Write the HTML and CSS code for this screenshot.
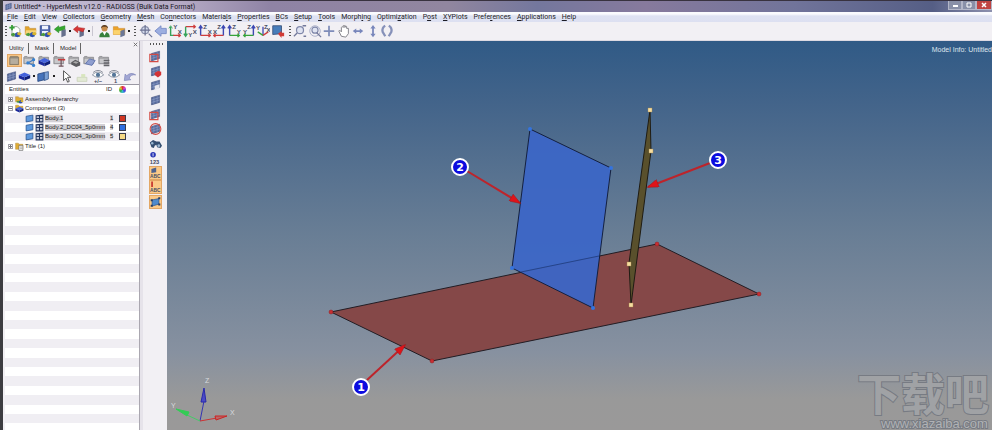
FILE: index.html
```html
<!DOCTYPE html>
<html lang="en">
<head>
<meta charset="utf-8">
<title>Untitled* - HyperMesh v12.0 - RADIOSS (Bulk Data Format)</title>
<link rel="stylesheet" href="styles.css">
</head>
<body>
<svg class="defs" aria-hidden="true">
  <defs>
    <symbol id="cubes" viewBox="0 0 16 16"><path fill="#2e4faf" d="M7 11l3-2 3 2v3l-3 1-3-1z"/><path fill="#d8b52c" d="M10 10l3-1 2 2-2 2-3-1z"/><path fill="#4a9a3c" d="M3 11l3-1 2 2-2 2-3-1z"/></symbol>
    <symbol id="mesh" viewBox="0 0 16 16"><path fill="#566a9c" stroke="#33416e" stroke-width=".6" d="M3 5l10-3v9L3 14z"/><path stroke="#8d9cc6" stroke-width=".8" fill="none" d="M6 4v9M10 3v9M3 8l10-3M3 11l10-3"/></symbol>
    <symbol id="new" viewBox="0 0 16 16"><path fill="#fff" stroke="#8a9a8a" d="M4 3h6l3 3v8H4z"/><path stroke="#35a035" stroke-width="2" d="M1 4h6M4 1v6"/><use href="#cubes"/></symbol>
    <symbol id="open" viewBox="0 0 16 16"><path fill="#e3a52e" stroke="#c08a30" stroke-width=".7" d="M2 3h4l1 2h7v7H2z"/><path fill="#f6d478" d="M3 7h12l-2 5H2z"/><use href="#cubes"/></symbol>
    <symbol id="save" viewBox="0 0 16 16"><path fill="#5269b2" stroke="#344a8a" d="M2 2h11v11H2z"/><path fill="#eef2fc" d="M4 2h7v4H4zM4 8h7v5H4z"/><use href="#cubes"/></symbol>
    <symbol id="import" viewBox="0 0 16 16"><path fill="#67708d" d="M9 7l5-1v7l-5 2z"/><path fill="#35a82f" stroke="#238020" stroke-width=".6" d="M1 6l5-4v2l7-2v4L6 8v2z"/></symbol>
    <symbol id="export" viewBox="0 0 16 16"><path fill="#67708d" d="M8 8l5-2v7l-5 2z"/><path fill="#d73635" stroke="#a62424" stroke-width=".6" d="M1 6l5-4v2l8 1-2 4-6-2v3z"/></symbol>
    <symbol id="user" viewBox="0 0 16 16"><path fill="#37803b" d="M2 15q0-6 6-6t6 6z"/><path fill="#fff" d="M6 9h4l-2 4z"/><circle cx="8" cy="5" r="3.4" fill="#c68b49"/><path fill="#573b20" d="M4 5q0-4 4-4t4 4L10 3H6z"/></symbol>
    <symbol id="load" viewBox="0 0 16 16"><path fill="#eca32a" stroke="#c98222" stroke-width=".6" d="M1 3h5l1 2h7v7H1z"/><path fill="#fbd36d" d="M1 7h9v5H1z"/><path fill="#6b7796" d="M9 8l5-2v7l-5 2z"/></symbol>
    <symbol id="fit" viewBox="0 0 16 16"><circle cx="7" cy="7" r="4" fill="#d4dbed" stroke="#8b91ac" stroke-width="1.4"/><path stroke="#6c7292" stroke-width="1.4" d="M7 1v12M1 7h12M11 11l4 4"/></symbol>
    <symbol id="back" viewBox="0 0 16 16"><path fill="#9caee0" stroke="#7689c5" d="M1 8l7-6v3h6v6H8v3z"/></symbol>
    <symbol id="axl" viewBox="0 0 16 16"><path fill="none" stroke="#36a35a" stroke-width="1.6" d="M3 3v10h4"/><path fill="none" stroke="#ce3d3d" stroke-width="1.6" d="M6 13h8M12 11l2 2-2 2"/><path fill="none" stroke="#36a35a" d="M1 5l2-3 2 3"/></symbol>
    <symbol id="axt" viewBox="0 0 16 16"><path fill="none" stroke="#ce3d3d" stroke-width="1.6" d="M3 3h11M12 1l2 2-2 2"/><path fill="none" stroke="#36a35a" stroke-width="1.6" d="M3 3v11M1 11l2 3 2-3"/></symbol>
    <symbol id="axzl" viewBox="0 0 16 16"><path fill="none" stroke="#3d49b3" stroke-width="1.6" d="M3 13V2M1 5l2-3 2 3"/><path fill="none" stroke="#ce3d3d" stroke-width="1.6" d="M3 13h11M12 11l2 2-2 2"/></symbol>
    <symbol id="axzr" viewBox="0 0 16 16"><path fill="none" stroke="#3d49b3" stroke-width="1.6" d="M13 13V2M11 5l2-3 2 3"/><path fill="none" stroke="#ce3d3d" stroke-width="1.6" d="M13 13H2M4 11l-2 2 2 2"/></symbol>
    <symbol id="ayzl" viewBox="0 0 16 16"><path fill="none" stroke="#3d49b3" stroke-width="1.6" d="M3 13V2M1 5l2-3 2 3"/><path fill="none" stroke="#36a33a" stroke-width="1.6" d="M3 13h11M12 11l2 2-2 2"/></symbol>
    <symbol id="ayzr" viewBox="0 0 16 16"><path fill="none" stroke="#3d49b3" stroke-width="1.6" d="M13 13V2M11 5l2-3 2 3"/><path fill="none" stroke="#36a33a" stroke-width="1.6" d="M13 13H2M4 11l-2 2 2 2"/></symbol>
    <symbol id="iso" viewBox="0 0 16 16"><path stroke="#3d49b3" stroke-width="1.5" d="M8 13V3"/><path stroke="#36a33a" stroke-width="1.5" d="M8 13L2 9"/><path stroke="#ce3d3d" stroke-width="1.5" d="M8 13l6-4"/></symbol>
    <symbol id="shade" viewBox="0 0 16 16"><path fill="#477dba" stroke="#3d557d" d="M2 2h10v9l-10 1z"/><path fill="#d13b35" d="M8 11l4-3v2h3v4h-3v2z"/></symbol>
    <symbol id="zoom" viewBox="0 0 16 16"><circle cx="8" cy="7" r="4" fill="#dfe3f1" stroke="#8088aa" stroke-width="1.4"/><path stroke="#73799b" stroke-width="1.5" d="M5 10l-4 4M12 14h3M11 2h4"/></symbol>
    <symbol id="zoomc" viewBox="0 0 16 16"><circle cx="8" cy="8" r="6" fill="none" stroke="#a2a9c5"/><circle cx="8" cy="7" r="3.5" fill="#dfe3f1" stroke="#8088aa" stroke-width="1.3"/><path stroke="#73799b" stroke-width="1.5" d="M10 10l5 5"/></symbol>
    <symbol id="plus" viewBox="0 0 16 16"><path stroke="#7f8cb9" stroke-width="2" d="M2 8h12M8 2v12"/></symbol>
    <symbol id="hand" viewBox="0 0 16 16"><path fill="#fff" stroke="#77777f" d="M5 14L2 8l1-1 2 2V4l1-1 1 1V2h2v2l1-2 1 1v2l2 0v6l-3 4z"/></symbol>
    <symbol id="lr" viewBox="0 0 16 16"><path fill="#7886bb" d="M2 8l4-3v2h4V5l4 3-4 3V9H6v2z"/></symbol>
    <symbol id="ud" viewBox="0 0 16 16"><path fill="#7886bb" d="M8 1l3 4H9v6h2l-3 4-3-4h2V5H5z"/></symbol>
    <symbol id="rot" viewBox="0 0 16 16"><path fill="none" stroke="#8691b9" stroke-width="2.6" d="M6 2Q2 4 3 9l3 5M10 2q4 2 3 7l-3 5"/></symbol>
    <symbol id="folder" viewBox="0 0 16 16"><path fill="#a5a5a8" stroke="#7d7d82" stroke-width=".8" d="M1 4l1-1h3l1 1h7v8H1z"/><path fill="#c9c9cc" d="M2 6h10v5H2z"/></symbol>
    <symbol id="fsel" viewBox="0 0 16 16"><path fill="#8f8779" stroke="#6c6458" stroke-width=".8" d="M1 4l1-2h10l2 1v11H1z"/><path fill="#b6ad9e" d="M2 5h11v8H2z"/></symbol>
    <symbol id="fnode" viewBox="0 0 16 16"><use href="#folder"/><path stroke="#3c73bd" stroke-width="1.3" d="M6 11l7-4M6 11l7 3"/><circle cx="6" cy="11" r="2" fill="#3780d0"/><circle cx="13" cy="7" r="2" fill="#3780d0"/><circle cx="13" cy="14" r="2" fill="#3780d0"/></symbol>
    <symbol id="cube" viewBox="0 0 16 16"><path fill="#1b2a9d" d="M1 8l7 3v4l-7-3z"/><path fill="#10207b" d="M8 11l7-3v4l-7 3z"/><path fill="#4462dc" d="M1 8l7-3 7 3-7 3z"/></symbol>
    <symbol id="fcube" viewBox="0 0 16 16"><use href="#folder"/><use href="#cube"/></symbol>
    <symbol id="fred" viewBox="0 0 16 16"><use href="#folder"/><path stroke="#ca3737" stroke-width="2" d="M6 7h9"/><path stroke="#6d4d55" stroke-width="1.4" d="M10 7v8M7 15h6"/></symbol>
    <symbol id="fgray" viewBox="0 0 16 16"><use href="#folder"/><path fill="#5c5c60" d="M4 10l5-3 6 3v4l-5 2-6-3z"/><path fill="#aaa" d="M6 10l3-1 4 1-3 2z"/></symbol>
    <symbol id="fblue" viewBox="0 0 16 16"><use href="#folder"/><path fill="#8f9ecf" stroke="#596da8" d="M3 12l5-6 7 2-4 6z"/></symbol>
    <symbol id="flist" viewBox="0 0 16 16"><use href="#folder"/><path stroke="#66666b" stroke-width="2" d="M7 8h7M7 11h7M7 14h7"/></symbol>
    <symbol id="comp" viewBox="0 0 16 16"><path fill="#4673bb" stroke="#26467f" d="M1 5l8-2v9l-8 2z"/><path fill="#7ba0d5" stroke="#35588e" d="M9 3l5-1v9l-5 2z"/></symbol>
    <symbol id="leaf" viewBox="0 0 16 16"><path fill="#5f9ade" stroke="#26528f" stroke-width="1.4" d="M2 4l12-2v10l-12 2z"/></symbol>
    <symbol id="arrow" viewBox="0 0 16 16"><path fill="#fff" stroke="#333" d="M5 1v12l3-3 2 5 2-1-2-5h4z"/></symbol>
    <symbol id="box" viewBox="0 0 16 16"><path fill="#e3ead4" stroke="#cad3bb" d="M2 9h12v5H2z"/><path fill="#d8e6be" d="M7 5h5v4H7z"/></symbol>
    <symbol id="eye" viewBox="0 0 16 16"><path fill="#fff" stroke="#7d8695" d="M1 6q7-7 14 0-7 6-14 0z"/><circle cx="8" cy="6" r="2.6" fill="#557698"/><path stroke="#737986" d="M2 3q6-5 12 0" fill="none"/></symbol>
    <symbol id="undo" viewBox="0 0 16 16"><path fill="#a2a7d4" stroke="#7a80b5" stroke-width=".8" d="M1 13l1-8 2 2q5-5 11-1-6-1-8 4l2 2z"/></symbol>
    <symbol id="mred" viewBox="0 0 16 16"><use href="#mesh"/><path fill="none" stroke="#d34b45" stroke-width="1.4" d="M1 6h10v9H1z"/></symbol>
    <symbol id="mdot" viewBox="0 0 16 16"><use href="#mesh"/><path fill="#d33335" d="M7 10l4-2 4 1v4l-4 3-4-3z"/></symbol>
    <symbol id="mhalf" viewBox="0 0 16 16"><use href="#mesh"/><path fill="#e8e8ef" d="M7 9l6-2v5l-6 2z"/></symbol>
    <symbol id="mring" viewBox="0 0 16 16"><use href="#mesh"/><circle cx="8" cy="8" r="6.6" fill="none" stroke="#d34b45" stroke-width="1.3"/></symbol>
    <symbol id="bino" viewBox="0 0 16 16"><path fill="#344e70" d="M1 6l4-3 4 2 4 0 3 5-2 3-4-1-1-3-2 1-1 3-3-1z"/><circle cx="4" cy="7" r="1.5" fill="#9ab7d1"/><circle cx="12" cy="10" r="1.7" fill="#9ab7d1"/></symbol>
    <symbol id="plate" viewBox="0 0 16 16"><path fill="#4e8acc" stroke="#2b568f" d="M3 5l10-2v8L3 14z"/><path fill="#283d62" d="M1 4h3v3H1zM12 1h3v3h-3zM12 10h3v3h-3zM1 12h3v3H1z"/></symbol>
    <symbol id="grid" viewBox="0 0 16 16"><path fill="#c4c9d8" stroke="#24355d" stroke-width="1.8" d="M2 3l12-1v12H2zM8 2v12M2 8h12"/></symbol>
    <symbol id="fasm" viewBox="0 0 16 16"><path fill="#e0ad35" stroke="#a98030" stroke-width=".7" d="M1 3h5l1 2h7v7H1z"/><use href="#cubes"/></symbol>
    <symbol id="fcomp" viewBox="0 0 16 16"><path fill="#e0ad35" stroke="#a98030" stroke-width=".7" d="M1 2h5l1 2h7v7H1z"/><use href="#cube"/></symbol>
    <symbol id="ftitle" viewBox="0 0 16 16"><path fill="#e0ad35" stroke="#a98030" stroke-width=".7" d="M1 2h5l1 2h7v9H1z"/><path fill="#fff" stroke="#555" d="M7 6h7v9H7z"/><path stroke="#666" d="M9 9h4M9 12h4"/></symbol>
  </defs>
</svg>
<div class="window">
  <header class="titlebar">
    <svg class="logo"><use href="#mesh"/></svg>
    <h1>Untitled* - HyperMesh v12.0 - RADIOSS (Bulk Data Format)</h1>
    <div class="winbtns">
      <button aria-label="Minimize"><svg viewBox="0 0 8 8"><path d="M2 5h5" stroke="#fff" stroke-width="2"/></svg></button>
      <button aria-label="Maximize"><svg viewBox="0 0 8 8"><path d="M2 2h4v4H2z" stroke="#fff" fill="none"/></svg></button>
      <button class="close" aria-label="Close"><svg viewBox="0 0 8 8"><path d="M2 2l4 4M6 2L2 6" stroke="#fff" stroke-width="1.5"/></svg></button>
    </div>
  </header>
  <nav class="menubar">
    <a href="#"><u>F</u>ile</a><a href="#"><u>E</u>dit</a><a href="#"><u>V</u>iew</a><a href="#"><u>C</u>ollectors</a><a href="#"><u>G</u>eometry</a><a href="#"><u>M</u>esh</a><a href="#">Co<u>n</u>nectors</a><a href="#">Materia<u>l</u>s</a><a href="#"><u>P</u>roperties</a><a href="#"><u>B</u>Cs</a><a href="#"><u>S</u>etup</a><a href="#"><u>T</u>ools</a><a href="#">Morph<u>i</u>ng</a><a href="#">Optimi<u>z</u>ation</a><a href="#">P<u>o</u>st</a><a href="#"><u>X</u>YPlots</a><a href="#">Prefe<u>r</u>ences</a><a href="#"><u>A</u>pplications</a><a href="#"><u>H</u>elp</a>
  </nav>
  <div class="toolbar">
    <i class="grip"></i>
    <button aria-label="New"><svg><use href="#new"/></svg></button>
    <button aria-label="Open"><svg><use href="#open"/></svg></button>
    <button aria-label="Save"><svg><use href="#save"/></svg></button>
    <button aria-label="Import"><svg><use href="#import"/></svg></button><i class="more"></i>
    <button aria-label="Export"><svg><use href="#export"/></svg></button><i class="more"></i>
    <i class="sep"></i>
    <button aria-label="User profile"><svg><use href="#user"/></svg></button>
    <button aria-label="Load"><svg><use href="#load"/></svg></button><i class="more"></i>
    <i class="grip"></i>
    <div class="group views">
      <button aria-label="Fit"><svg><use href="#fit"/></svg></button>
      <button aria-label="Back"><svg><use href="#back"/></svg></button>
      <button aria-label="XY top"><svg viewBox="0 0 16 16"><use href="#axl"/><text x="6" y="6">Y</text><text x="11" y="11">X</text></svg></button>
      <button aria-label="XY bottom"><svg viewBox="0 0 16 16"><use href="#axt"/><text x="6" y="15">Y</text><text x="11" y="11">X</text></svg></button>
      <button aria-label="XZ front"><svg viewBox="0 0 16 16"><use href="#axzl"/><text x="6" y="6">Z</text><text x="11" y="11">X</text></svg></button>
      <button aria-label="XZ rear"><svg viewBox="0 0 16 16"><use href="#axzr"/><text x="6" y="6">Z</text><text x="1" y="11">X</text></svg></button>
      <button aria-label="YZ left"><svg viewBox="0 0 16 16"><use href="#ayzl"/><text x="6" y="6">Z</text><text x="11" y="11">Y</text></svg></button>
      <button aria-label="YZ right"><svg viewBox="0 0 16 16"><use href="#ayzr"/><text x="6" y="6">Z</text><text x="1" y="11">Y</text></svg></button>
      <button aria-label="Isometric"><svg viewBox="0 0 16 16"><use href="#iso"/><text x="0" y="7">Y</text><text x="9" y="6">Z</text><text x="12" y="9">X</text></svg></button>
      <button aria-label="Shading"><svg><use href="#shade"/></svg></button>
    </div>
    <i class="grip"></i>
    <div class="group moves">
      <button aria-label="Zoom"><svg><use href="#zoom"/></svg></button>
      <button aria-label="Circle zoom"><svg><use href="#zoomc"/></svg></button>
      <button aria-label="Center"><svg><use href="#plus"/></svg></button>
      <button aria-label="Pan"><svg><use href="#hand"/></svg></button>
      <button aria-label="Rotate left right"><svg><use href="#lr"/></svg></button>
      <button aria-label="Rotate up down"><svg><use href="#ud"/></svg></button>
      <button aria-label="Spin"><svg><use href="#rot"/></svg></button>
    </div>
  </div>
  <div class="work">
    <aside class="panel">
      <div class="tabs"><button>Utility</button><button>Mask</button><button>Model</button><button class="x" aria-label="Close panel"><svg viewBox="0 0 8 8"><path d="M2 2l4 4M6 2L2 6" stroke="#666"/></svg></button></div>
      <div class="icons">
        <button class="hot" aria-label="Model view"><svg><use href="#fsel"/></svg></button>
        <button aria-label="Assembly view"><svg><use href="#fnode"/></svg></button>
        <button aria-label="Component view"><svg><use href="#fcube"/></svg></button>
        <button aria-label="Property view"><svg><use href="#fred"/></svg></button>
        <button aria-label="Material view"><svg><use href="#fgray"/></svg></button>
        <button aria-label="Include view"><svg><use href="#fblue"/></svg></button>
        <button aria-label="List view"><svg><use href="#flist"/></svg></button>
      </div>
      <div class="icons second">
        <button class="slim" aria-label="Elements"><svg><use href="#mesh"/></svg></button>
        <button class="slim" aria-label="Solid"><svg viewBox="0 2 16 16"><use href="#cube" width="16" height="16"/></svg></button><i class="more"></i>
        <button aria-label="Geometry"><svg><use href="#comp"/></svg></button><i class="more"></i>
        <button class="wide" aria-label="Select"><svg><use href="#arrow"/></svg></button>
        <button class="wide" aria-label="Isolate"><svg><use href="#box"/></svg></button>
        <button class="wide" aria-label="Show or hide"><svg viewBox="0 0 16 16"><use href="#eye"/><text x="3" y="16">+/−</text></svg></button>
        <button class="wide" aria-label="Show one"><svg viewBox="0 0 16 16"><use href="#eye"/><text x="8" y="16">1</text></svg></button>
        <button class="wide" aria-label="Undo"><svg><use href="#undo"/></svg></button>
      </div>
      <div class="tree">
        <table>
          <thead><tr><th>Entities</th><th class="id">ID</th><th class="col"><i class="wheel"></i></th></tr></thead>
          <tbody>
            <tr><td><div class="node"><i class="tog plus"></i><svg><use href="#fasm"/></svg>Assembly Hierarchy</div></td><td></td><td></td></tr>
            <tr><td><div class="node"><i class="tog"></i><svg><use href="#fcomp"/></svg>Component (3)</div></td><td></td><td></td></tr>
            <tr><td><div class="node leaf"><svg><use href="#leaf"/></svg><svg><use href="#grid"/></svg><mark>Body.1</mark></div></td><td class="id"><mark>1</mark></td><td><i class="sw red"></i></td></tr>
            <tr><td><div class="node leaf"><svg><use href="#leaf"/></svg><svg><use href="#grid"/></svg><mark>Body.2_DC04_5p0mm</mark></div></td><td class="id"><mark>4</mark></td><td><i class="sw blue"></i></td></tr>
            <tr><td><div class="node leaf"><svg><use href="#leaf"/></svg><svg><use href="#grid"/></svg><mark>Body.3_DC04_3p0mm</mark></div></td><td class="id"><mark>5</mark></td><td><i class="sw sand"></i></td></tr>
            <tr><td><div class="node"><i class="tog plus"></i><svg><use href="#ftitle"/></svg>Title (1)</div></td><td></td><td></td></tr>
          </tbody>
        </table>
      </div>
    </aside>
    <div class="sidebar">
      <i class="hgrip"></i>
      <div class="stack">
        <button aria-label="Mask"><svg><use href="#mred"/></svg></button>
        <button aria-label="Reverse"><svg><use href="#mdot"/></svg></button>
        <button aria-label="Unmask adjacent"><svg><use href="#mhalf"/></svg></button>
        <button aria-label="Unmask all"><svg><use href="#mesh"/></svg></button>
        <button aria-label="Unmask shown"><svg><use href="#mred"/></svg></button>
        <button aria-label="Spherical clipping"><svg><use href="#mring"/></svg></button>
        <button aria-label="Find"><svg><use href="#bino"/></svg></button>
        <button aria-label="Numbers"><svg viewBox="0 0 16 16"><circle cx="5" cy="4" r="3.4" fill="#2936b5"/><path d="M5 2v4" stroke="#fff"/><text x="1" y="15">123</text></svg></button>
        <button class="hot" aria-label="Element handles"><svg viewBox="0 0 16 16"><path d="M2 2l7-2v7l-7 1z" fill="#4f628d"/><text x="0" y="15">ABC</text></svg></button>
        <button class="hot" aria-label="Load handles"><svg viewBox="0 0 16 16"><path d="M3 0v8" stroke="#c52f2b" stroke-width="2.4"/><text x="0" y="15">ABC</text></svg></button>
        <button class="hot" aria-label="Fixed points"><svg><use href="#plate"/></svg></button>
      </div>
    </div>
    <main class="viewport">
      <svg class="scene" viewBox="167 41 825 389" preserveAspectRatio="xMinYMin meet" role="img" aria-label="Model with three bodies">
        <defs>
          <marker id="tip" viewBox="0 0 14 10" refX="13" refY="5" markerWidth="13" markerHeight="8" markerUnits="userSpaceOnUse" orient="auto"><path d="M0 0l14 5-14 5z" fill="#e01319" stroke="#981c22" stroke-width=".6"/></marker>
        </defs>
        <path d="M331 312L657 244 759 294 432 361z" fill="#854848" stroke="#221d24"/>
        <path d="M530 129L611 168 593 308 512 268z" fill="#3c66c6" fill-opacity=".95" stroke="#14203f"/>
        <path d="M521 272L599 256" stroke="#1c3672" stroke-opacity=".7"/>
        <path d="M650 110L651 151 631 305 629 263z" fill="#59502c" stroke="#1f1c13"/>
        <g fill="#c92d31" stroke="#8c2023" stroke-width=".5"><circle cx="331" cy="312" r="2"/><circle cx="657" cy="244" r="2"/><circle cx="759" cy="294" r="2"/><circle cx="432" cy="361" r="2"/></g>
        <g fill="#3474df"><circle cx="530" cy="129" r="2"/><circle cx="611" cy="168" r="2"/><circle cx="593" cy="308" r="2"/><circle cx="512" cy="268" r="2"/></g>
        <g fill="#f6dda0" stroke="#a8894b" stroke-width=".4"><path d="M648 108h4v4h-4zM649 149h4v4h-4zM627 262h4v4h-4zM629 303h4v4h-4z"/></g>
        <g stroke="#bd242b" stroke-width="2"><path d="M367 380L405 345" marker-end="url(#tip)"/><path d="M467 171L520 203" marker-end="url(#tip)"/><path d="M710 163L648 187" marker-end="url(#tip)"/></g>
        <g fill="#0b0bdf" stroke="#fff" stroke-width="2"><circle cx="361" cy="387" r="8"/><circle cx="460" cy="167" r="8"/><circle cx="718" cy="160" r="8"/></g>
        <g class="num"><text x="361" y="391">1</text><text x="460" y="171">2</text><text x="718" y="164">3</text></g>
        <path d="M200 421l4-20" stroke="#3434b4"/><path d="M204 388l2 14h-5z" fill="#4a4ac6" stroke="#2929aa"/>
        <path d="M200 421l17-3" stroke="#c33"/><path d="M227 416l-11 4-1-4z" fill="#b66" stroke="#c22"/>
        <path d="M200 421l-13-6" stroke="#4c6"/><path d="M176 409l13 3-2 4z" fill="#3c5" stroke="#3c5"/>
        <g class="axis"><text x="205" y="383">Z</text><text x="171" y="408">Y</text><text x="230" y="415">X</text></g>
        <g class="mark"><text class="cjk" x="857" y="411">下载吧</text><text class="url" x="881" y="428">www.xiazaiba.com</text></g>
      </svg>
      <p class="info">Model Info: Untitled</p>
    </main>
  </div>
</div>
</body>
</html>
```
FILE: styles.css
```css
* { box-sizing: border-box; }
html, body { height: 100%; }
body { margin: 0; background: #3d3d41; font-family: "Liberation Sans", sans-serif; color: #222; }
button { border: 0; background: none; padding: 0; margin: 0; color: inherit; font: inherit; display: block; flex: none; width: 15px; height: 14px; }
button svg { display: block; width: 100%; height: 100%; }
button svg text { font: bold 7px "Liberation Sans", sans-serif; fill: #454c63; }
i { display: block; flex: none; }
.defs { position: absolute; width: 0; height: 0; }

.window { height: 100vh; min-height: 300px; margin-left: 3px; display: flex; flex-direction: column; background: #f2f0f4; overflow: hidden; }

.titlebar { flex: none; height: 12px; display: flex; align-items: center; border-top: 1px solid #38323f; background: linear-gradient(90deg, #c5bfd6 0, #b5aac5 18%, #8f83a5 27%, #91869f 45%, #74779d 54%, #877a9d 65%, #71749a 80%, #555e85 94%, #8d91ae 100%); }
.logo { width: 9px; height: 9px; margin: 0 1px; }
.titlebar h1 { margin: 0; flex: 1; font: 7px/10px Roboto, sans-serif; color: #17151f; white-space: nowrap; }
.winbtns { display: flex; align-self: flex-start; }
.winbtns button { width: 14px; height: 9px; background: #8990a8; border: 1px solid #b3b6c8; border-top: 0; }
.winbtns .close { width: 16px; background: #c04441; }

.menubar { flex: none; height: 10px; display: flex; gap: 6px; padding-left: 4px; background: linear-gradient(#fafbfe 0 2px, #dee2f2 4px, #dde0f1); font: 7px/10px Roboto, sans-serif; }
.menubar a { color: #1d1d26; text-decoration: none; white-space: nowrap; }

.toolbar { flex: none; height: 19px; display: flex; align-items: center; padding-left: 1px; border-bottom: 1px solid #dcd9e2; }
.grip { width: 4px; height: 12px; background: radial-gradient(circle, #555 0 1px, transparent 1px) 0 0 / 4px 3px; }
.more { width: 4px; height: 14px; background: linear-gradient(#222, #222) center / 2px 2px no-repeat; }
.sep { width: 1px; height: 10px; margin: 0 4px 0 1px; background: #c9c6d0; }
.toolbar .more + .grip { margin: 0 2px; }
.group { display: flex; justify-content: space-between; }
.group button { width: 14px; }
.views { width: 146px; margin-right: 3px; }
.moves { width: 101px; margin-left: 1px; }

.work { flex: 1; min-height: 0; display: flex; }
.panel { width: 137px; flex: none; display: flex; flex-direction: column; border-right: 1px solid #aaa7b0; }
.tabs { height: 13px; display: flex; align-items: flex-end; font-size: 6px; line-height: 11px; }
.tabs button { width: auto; height: 11px; padding: 0 4px 0 6px; border-right: 1px solid #666; }
.tabs .x { width: 7px; height: 7px; padding: 0; margin-left: auto; align-self: flex-start; border: 0; }
.icons { height: 14px; display: flex; padding-left: 4px; }
.icons button { height: 13px; }
.hot { background: #fbc987; border: 1px solid #e3a765; }
.second { height: 16px; align-items: center; padding-left: 2px; }
.second .slim { width: 13px; }
.second .more { width: 5px; }
.second .wide { width: 16px; padding: 0 1px; }
.second .more + .wide { margin-left: 2px; }

.tree { flex: 1; margin-left: 2px; border-top: 1px solid #9b99a4; font-size: 6px; line-height: 9px; overflow: hidden;
  background: linear-gradient(#f0eef3 0 10px, #fff 10px 19px, #f0eef3 19px 29px, #fff 29px 38px, #f0eef3 38px 47px, #fff 47px 57px, #f0eef3 57px 66px, #fff 66px 76px, #f0eef3 76px 85px, #fff 85px) 0 9px / 100% 94px; }
table { width: 100%; border-collapse: collapse; table-layout: fixed; }
th, td { padding: 0; height: 9px; text-align: left; font-weight: normal; vertical-align: middle; }
tbody tr:nth-child(5n + 1) td, tbody tr:nth-child(5n + 3) td { height: 10px; }
th { background: #fff; }
th:first-child { padding-left: 4px; }
.id { width: 13px; }
th:last-child { width: 20px; }
tbody .id { padding-left: 4px; }
.node { display: flex; align-items: center; height: 9px; padding-left: 3px; white-space: nowrap; }
.node svg { width: 9px; height: 9px; margin-right: 1px; flex: none; }
.node.leaf { padding-left: 20px; }
.tog { width: 5px; height: 5px; margin-right: 2px; border: 1px solid #a3a1aa; background: linear-gradient(#777, #777) center / 3px 1px no-repeat #fff; }
.plus { background: linear-gradient(#777, #777) center / 3px 1px no-repeat, linear-gradient(#777, #777) center / 1px 3px no-repeat #fff; }
mark { background: #d3d1d6; color: #222; line-height: 7px; }
.wheel { width: 7px; height: 7px; border-radius: 50%; background: conic-gradient(#d33, #d4c, #44d, #3bc, #3a4, #dc3, #d33); }
.sw { width: 7px; height: 7px; border: 1px solid #3b3b4a; }
.red { background: #d13622; }
.blue { background: #2f6fe0; }
.sand { background: #f5d884; }

.sidebar { width: 27px; flex: none; padding: 2px 2px 0 3px; border-left: 3px solid #e6e3ea; display: flex; flex-direction: column; align-items: center; }
.hgrip { width: 14px; height: 2px; background: radial-gradient(circle, #555 0 1px, transparent 1px) 0 0 / 3px 2px; }
.stack { margin-top: 4px; height: 160px; display: flex; flex-direction: column; justify-content: space-between; }
.stack button { width: 13px; }

.viewport { flex: 1; min-width: 0; position: relative; background: linear-gradient(#305a86 0, #43648a 16%, #697e95 50%, #8791a0 80%, #999 92%, #9a9999 100%); overflow: hidden; }
.scene { display: block; width: 100%; }
.info { position: absolute; top: 4px; right: 0; margin: 0; font-size: 7px; line-height: 9px; color: #dfe6ee; }
.num { font: bold 11px "DejaVu Sans", sans-serif; fill: #fff; text-anchor: middle; }
.axis { font: 7px "Liberation Sans", sans-serif; fill: #d7dade; }
.mark { fill: #a0a2a5; stroke: #777b83; stroke-width: 2; paint-order: stroke; }
.cjk { font: bold 44px "Noto Sans CJK SC", sans-serif; }
.url { font: 13px "Liberation Sans", sans-serif; fill: #b0b2b5; }
```
